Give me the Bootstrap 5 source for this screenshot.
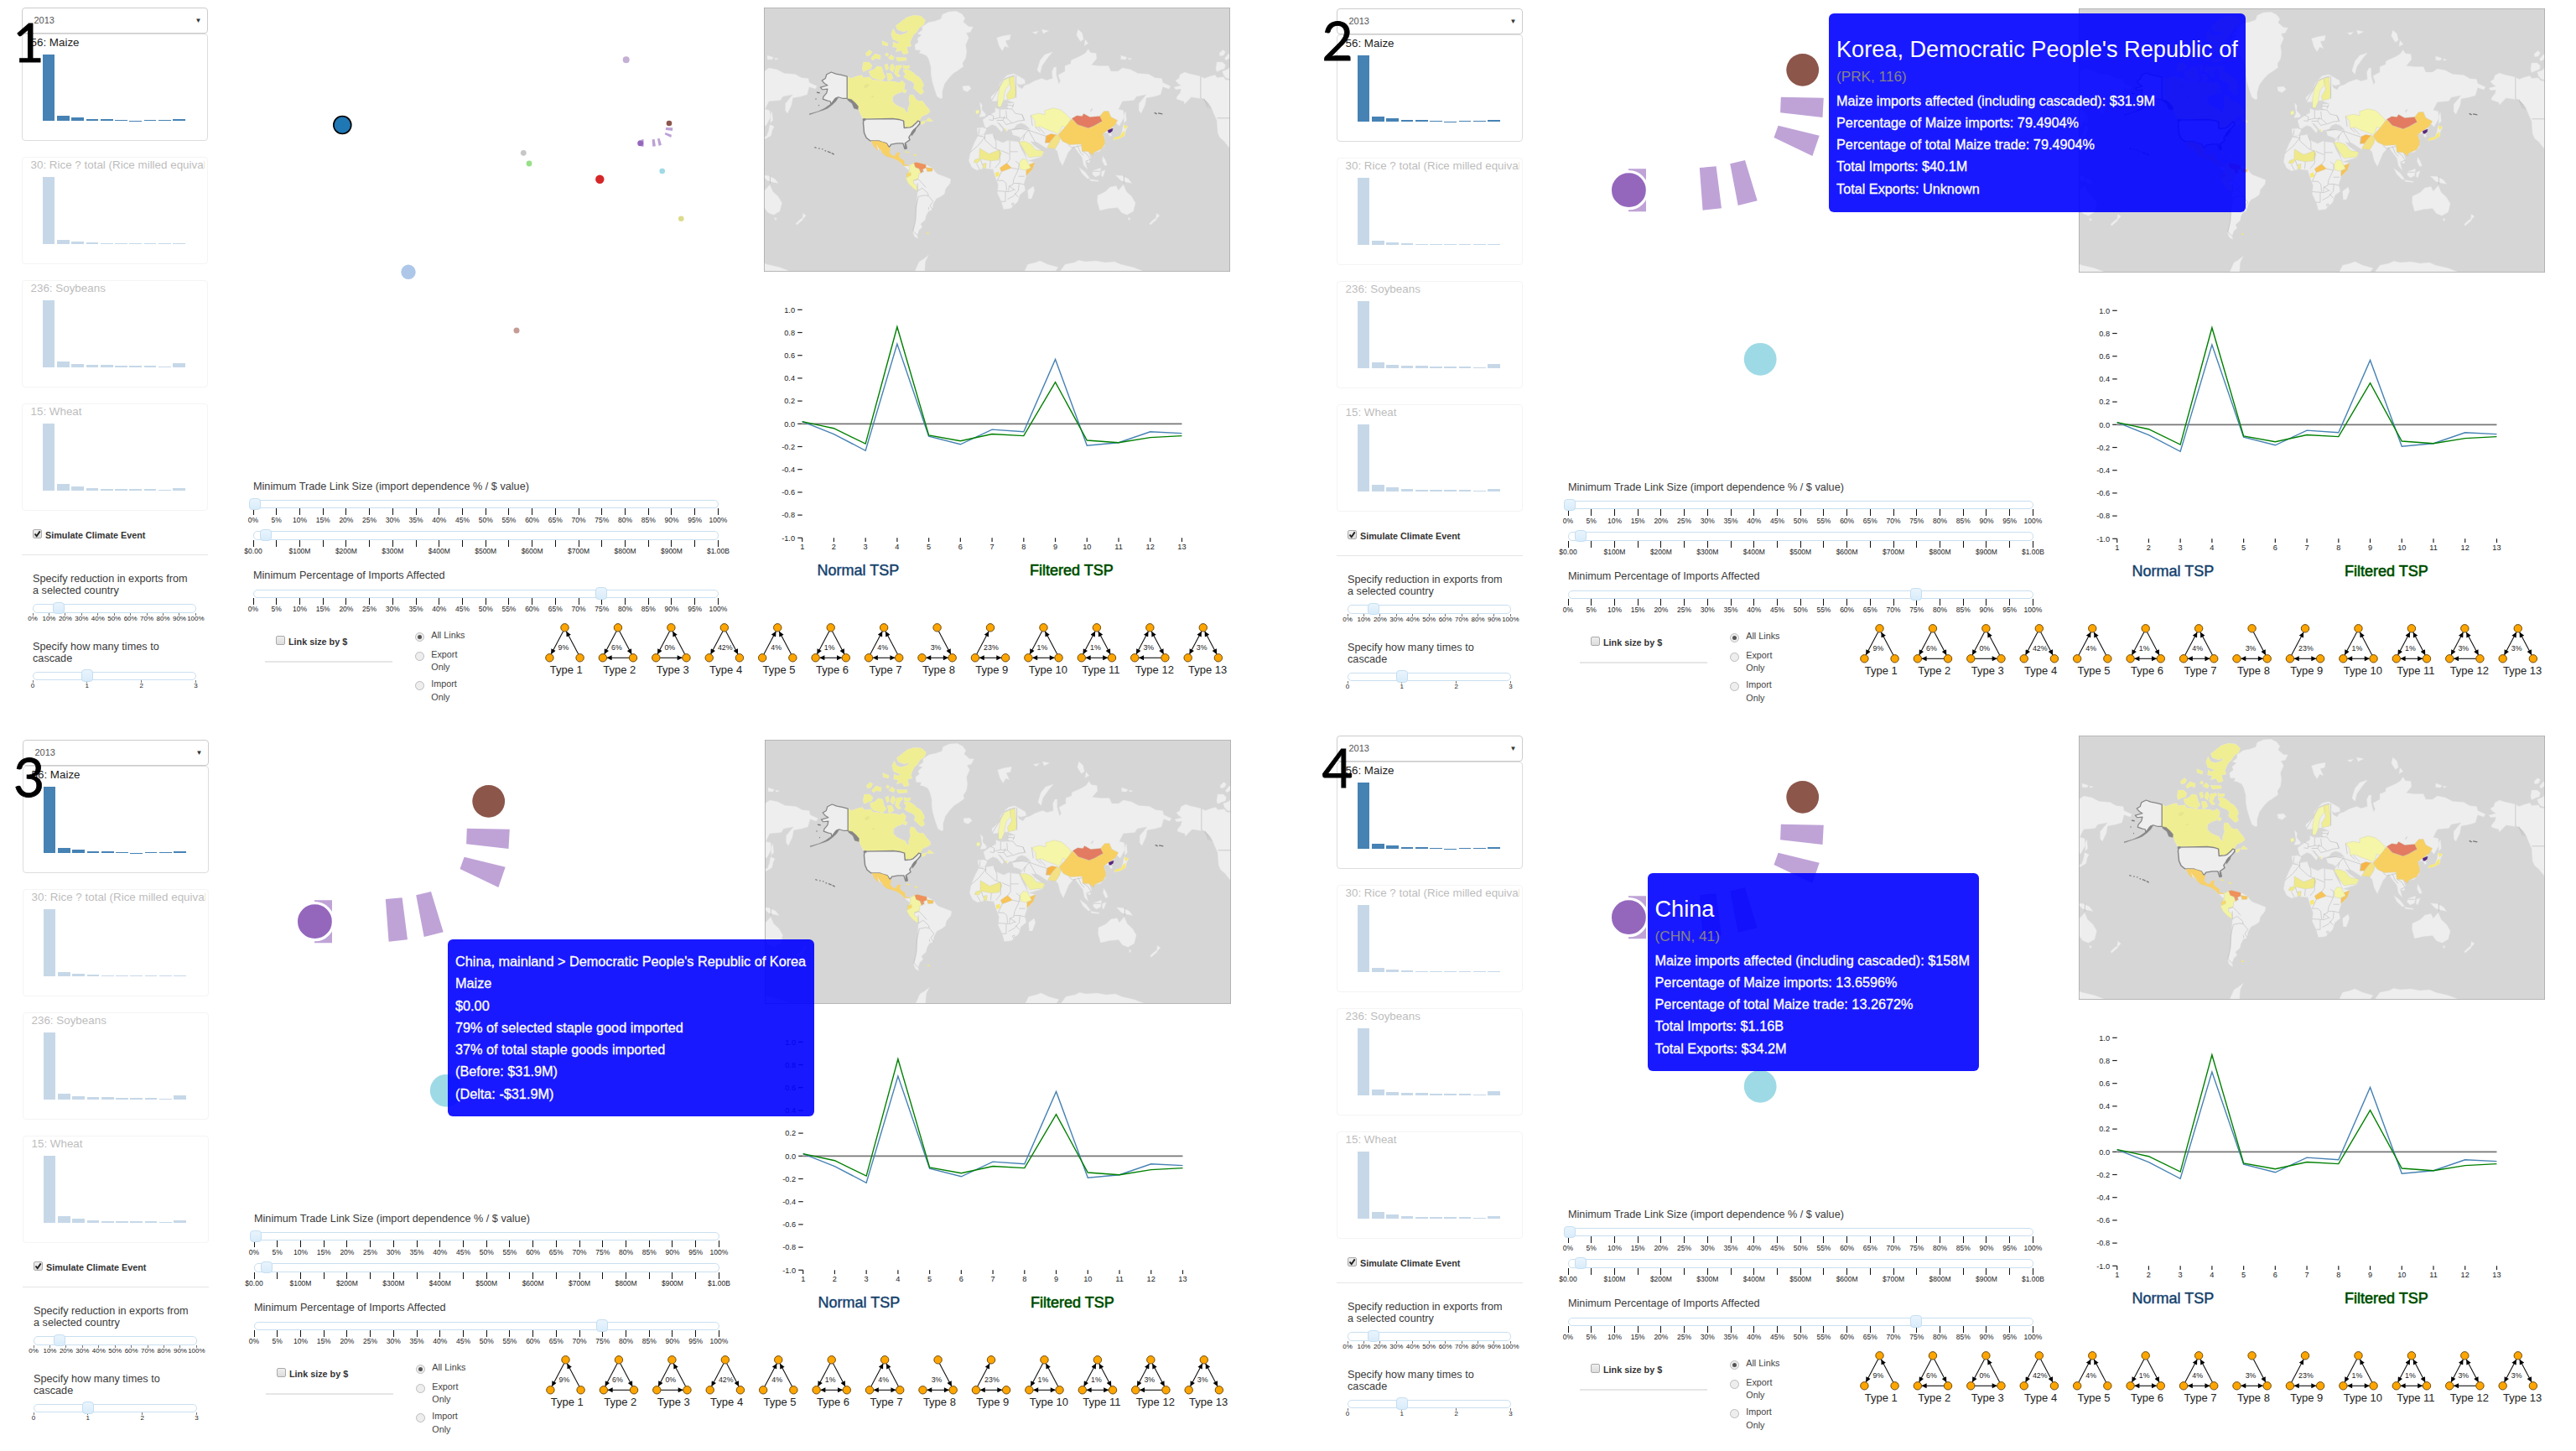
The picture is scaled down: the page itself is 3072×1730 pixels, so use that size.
<!DOCTYPE html>
<html lang="en">
<head>
<meta charset="utf-8">
<title>Staple food trade network explorer</title>
<link href="https://cdn.jsdelivr.net/npm/bootstrap@5.3.0/dist/css/bootstrap.min.css" rel="stylesheet">
<script src="https://cdn.jsdelivr.net/npm/bootstrap@5.3.0/dist/js/bootstrap.bundle.min.js"></script>
<style>
body{font-family:"Liberation Sans",Arial,sans-serif;color:#3a3a3a;background:#fff;width:3072px;height:1730px;overflow:hidden}
svg{display:block;flex:none}
svg text{font-family:"Liberation Sans",Arial,sans-serif}
.screen{height:865px;width:1504px}
.screen.wide{width:1568px}
.s2{padding-top:1px}.s3{padding:8px 0 0 1px}.s4{padding:3px 0 0 0}
.s3,.s4{height:865px}
.stepno{font-family:Lato,sans-serif;font-size:64px;line-height:64px;color:#000;z-index:5;-webkit-text-stroke:.8px #000}
.side{width:254px;padding:9px 6.5px 0 25.5px;flex:none}
.year{height:31px;border:1.4px solid #ccc;border-radius:4px;padding:0 6px 0 14px;font-size:11px;color:#555}
.arrow{font-size:8px;color:#333}
.crop{height:128.2px;border:1.3px solid #ddd;border-radius:4px;margin-bottom:18.7px;overflow:hidden}
.crop.dim{opacity:.3}
.crop-name{font-size:13.4px;line-height:17px;padding-left:10px;color:#222;white-space:nowrap;margin-right:3px;overflow:hidden;padding-top:.6px}
.bars{height:80px;margin-top:5.5px;padding-left:24.2px;gap:2.6px}
.bars i{width:14.7px;background:#4682b4;display:block}
.bx{width:11px;height:11px;border:1px solid #aaa;border-radius:2px;background:linear-gradient(#eee,#ddd);flex:none}
.lbl{font-size:10.8px;line-height:14px;font-weight:700;margin-left:4px;color:#333}
.rule{height:1.4px;background:#e6e6e6}
.cap{font-size:12.68px;line-height:13.7px;padding-left:13.5px}
.cap2{font-size:12.68px;line-height:15px}
.track{height:10.4px;border:1.7px solid #c9dff0;border-radius:5px;background:#fff}
.grip{width:14px;height:14.4px;top:-3.4px;margin-left:-7px;border:1px solid #c5dff2;border-radius:4px;background:linear-gradient(#e9f4fd,#d9ecfa)}
.ticks{height:18.4px;font-size:8.5px;line-height:9px;color:#222}
.ticks div{width:0;display:flex;flex-direction:column;align-items:center;white-space:nowrap}
.ticks div:before{content:"";width:1px;height:8px;background:#111;margin-bottom:1.4px;flex:none}
.small-t .ticks{height:11px;font-size:8px}
.small-t .ticks div:before{height:3px;margin-bottom:-1px;background:#777}
.side-s{padding:0 14px 0 13.5px}
.opt{font-size:10.8px;line-height:15.5px;color:#444}
.rd{width:11px;height:11px;border:1px solid #bbb;border-radius:50%;background:#eee;margin:4px 7.9px 0 0;flex:none;padding:2px}
.rd.on:before{content:"";display:block;width:5px;height:5px;border-radius:50%;background:#555}
.tip{background:rgba(0,0,255,.9);border-radius:6px;color:#fff;font-size:16.25px;line-height:26.25px;padding:13px 9px 14px;z-index:4;white-space:nowrap;-webkit-text-stroke:.3px #fff}
.tip.big{padding-top:22px}
.tip h3{font-size:27.15px;line-height:41px;margin:0;font-weight:400;-webkit-text-stroke:0}
.tip h4{font-size:17.2px;line-height:24px;margin:0 0 3.6px;font-weight:400;color:#858585;-webkit-text-stroke:0}
.t2{left:613px;top:16px;width:497px;height:237px}
.t3{left:534px;top:255px;width:437px;height:211px}
.t4{left:396.5px;top:176px;width:395px;height:236px}
</style>
</head>
<body>
<svg width="0" height="0" class="position-absolute">
<defs>
<marker id="ah" viewBox="0 0 10 10" refX="10" refY="5" markerWidth="7" markerHeight="6" markerUnits="userSpaceOnUse" orient="auto-start-reverse"><path d="M0 0L10 5L0 10z"/></marker>
<g id="land">
<path d="M298,273L310,280 330,272 345,268 350,277 372,275 378,285 400,288 420,291 440,290 455,292 465,296 475,288 485,300 482,315 472,330 458,335 445,345 444,362 455,375 470,383 482,388 488,400 494,404 494,388 500,370 497,355 500,338 512,340 520,355 530,362 540,360 550,375 562,390 565,400 555,408 540,415 532,425 530,432 532,442 522,455 512,465 505,478 497,490 500,500 485,512 490,530 484,532 478,512 460,512 440,516 433,526 425,512 412,508 398,538 372,503 360,492 353,475 350,430 340,405 333,385 325,370 312,358 298,352 285,350 268,347 258,358 246,372 244,362 235,360 220,354 222,345 232,332 235,318 218,320 212,312 235,305 225,298 217,288 228,280 232,266 247,258 262,264 280,268Z"/>
<path id="arctic" d="M478,250L490,247 500,252 512,260 520,270 530,275 540,290 545,305 540,315 545,330 535,338 522,325 512,315 515,300 505,290 492,285 480,275 486,265ZM350,222L368,222 378,232 375,245 362,250 350,256 347,245ZM368,255L385,248 395,236 410,240 415,262 422,275 410,288 395,283 380,279 372,268ZM418,232L428,228 432,245 424,252ZM438,232L445,228 452,240 445,258 436,250ZM455,235L472,232 475,240 466,248 462,262 470,272 460,275 450,262ZM478,232L488,236 500,234 498,245 480,246ZM425,262L440,262 446,280 430,290ZM358,190L370,178 378,185 372,198 360,200ZM375,208L388,192 406,198 404,212 390,208 380,216ZM410,145L430,155 428,165 412,160ZM425,188L432,194 428,202 420,196ZM430,208L440,195 450,206 445,215ZM455,205L488,206 490,216 460,218ZM447,150L458,156 470,150 500,150 505,165 490,168 495,190 480,195 472,180 455,185 460,170 445,168ZM455,92L475,75 490,62 512,55 535,57 550,72 545,88 530,100 522,115 512,125 505,140 500,155 480,150 465,150 445,140 440,120 447,102 455,120 470,125 490,118 496,108 480,114 460,106ZM560,420L575,432 565,434 552,432ZM535,436L550,430 548,440 538,446ZM480,318L490,322 486,332 476,330Z"/>
<path d="M525,120L540,108 540,95 560,80 580,76 600,68 605,52 625,42 650,40 668,50 678,65 672,78 690,95 704,96 695,115 682,118 690,135 680,160 683,185 680,208 670,225 672,238 655,252 640,262 625,280 612,300 605,325 605,350 600,353 588,345 580,320 572,290 568,262 568,240 562,215 555,200 540,192 530,190 535,180 518,178 516,160 528,150 524,138 538,125Z"/>
<path d="M375,504L400,504 412,508 425,513 430,525 437,528 434,545 442,555 452,558 458,546 467,545 464,558 472,568 482,575 482,588 495,590 500,590 513,582 552,588 575,602 580,612 590,622 615,632 632,640 630,655 615,675 612,692 600,702 585,710 575,730 572,750 560,755 552,772 550,785 535,800 540,812 530,822 524,840 526,853 515,845 510,830 515,810 520,780 522,740 525,683 510,672 495,655 488,640 490,625 498,610 480,592 460,572 440,563 412,548 400,528 385,520Z"/>
<path d="M763,360L762,345 772,335 785,320 790,300 800,283 815,268 835,263 855,275 870,285 872,298 855,303 845,298 850,310 862,318 870,305 885,300 900,290 925,280 940,287 960,280 958,255 965,240 972,240 972,268 980,300 985,290 978,268 1000,255 1000,235 1018,228 1020,215 1050,200 1065,190 1075,175 1082,188 1100,190 1102,210 1085,232 1110,235 1140,235 1148,255 1170,255 1185,243 1210,248 1235,262 1270,265 1290,278 1312,280 1315,295 1340,308 1335,318 1315,310 1308,338 1288,345 1262,350 1258,375 1245,405 1238,395 1238,370 1262,338 1230,345 1222,358 1185,362 1172,390 1188,395 1190,420 1175,450 1165,440 1150,462 1150,485 1145,488 1138,474 1122,476 1128,495 1128,520 1112,540 1090,545 1075,542 1083,565 1078,582 1065,575 1072,605 1060,590 1055,562 1040,540 1028,522 1010,545 992,592 982,572 975,540 965,530 940,530 910,508 888,505 900,520 932,545 925,560 880,575 870,540 855,510 855,490 832,482 828,466 860,460 888,462 872,445 858,440 845,445 835,460 818,462 812,470 806,462 790,440 780,436 800,462 795,472 778,450 765,445 750,455 738,482 720,482 716,458 742,455 735,428 755,412 775,400 775,385 790,392 815,390 815,370 838,368 812,356 770,362Z"/>
<path d="M720,485L768,478 775,498 800,510 815,502 850,507 858,530 880,575 903,580 895,605 875,630 868,655 872,680 855,695 848,720 825,745 802,748 795,720 782,690 785,660 775,630 768,605 740,602 715,608 700,598 690,575 695,545 708,510ZM880,680L898,665 902,680 892,710 882,710Z"/>
<path d="M725,365L733,375 732,392 745,408 742,416 724,418 730,400ZM713,394L723,393 724,404 712,408ZM670,308L690,306 698,316 685,328 672,322ZM780,135L800,128 825,124 822,142 808,145 818,170 806,165 798,182 788,165ZM960,186L935,195 920,215 910,250 920,262 926,235 945,205ZM1042,105L1055,118 1060,140 1050,148 1037,125ZM1065,142L1075,155 1062,163ZM895,115L915,112 905,122ZM925,105L948,110 930,120ZM1180,198L1200,205 1195,213 1180,212ZM1204,207L1216,210 1206,214ZM1195,398L1198,430 1190,440 1190,410ZM1188,445L1202,452 1196,465 1192,485 1175,495 1155,500 1160,492 1178,486 1184,468Z"/>
<path d="M1105,698L1130,685 1145,668 1165,664 1172,680 1188,660 1198,685 1215,702 1227,725 1220,755 1200,768 1182,760 1170,742 1140,745 1112,752 1104,720ZM1203,778L1211,780 1206,788ZM1295,762L1305,770 1292,785ZM1290,780L1296,784 1275,804 1272,798ZM1163,626L1185,628 1205,640 1215,655 1195,650 1180,645ZM1090,610L1115,600 1112,625 1098,632 1088,622ZM1045,598L1065,615 1080,637 1072,638 1055,620ZM1080,640L1108,645 1108,649 1082,646ZM1118,612L1130,608 1122,632 1117,628ZM1122,558L1130,572 1136,590 1128,592 1120,575Z"/>
<path d="M870,968L880,945 905,938 920,932 945,945 978,955 970,968ZM985,968L1000,945 1030,938 1045,930 1065,935 1100,932 1130,938 1160,935 1180,945 1220,955 1250,968ZM517,968L530,935 545,925 560,912 550,935 548,968Z"/>
</g>
<symbol id="world" viewBox="30 27 1502 944" preserveAspectRatio="none">
<rect x="30" y="27" width="1502" height="944" fill="#d6d6d6"/>
<g fill="#eee" stroke="#e6e6e6" stroke-width="1"><use href="#land" x="-1139"/><use href="#land" x="1139"/><use href="#land"/></g>
<path d="M50,627V655M1190,627V655M1437,273V350L1455,362 1468,388M1490,422H1532M1448,352L1460,385" stroke="#bbb" stroke-width="2" fill="none"/>
<path fill="#f0ee92" d="M298,273L310,280 330,272 345,268 350,277 372,275 378,285 400,288 420,291 440,290 455,292 465,296 475,288 485,300 482,315 472,330 458,335 445,345 444,362 455,375 470,383 482,388 488,400 494,404 494,388 500,370 497,355 500,338 512,340 520,355 530,362 540,360 550,375 562,390 565,400 555,408 540,415 532,430 520,440 510,453 486,457 480,432 465,427 447,424 350,424 340,405 333,385 325,370 312,358 298,352Z"/>
<use href="#arctic" fill="#f0ee92"/>
<path d="M350,308l12,-8 8,4 -12,12zM375,345l10,-4 -4,8z" fill="#e6e48c"/>
<path d="M298,352V273L280,268 262,264 247,258 232,266 228,280 217,288 225,298 235,305 212,312 218,320 235,318 232,332 222,345 220,354 235,360 244,362 246,372 252,365 262,350 270,347 285,352Z" fill="#eee" stroke="#868686" stroke-width="3.5" stroke-linejoin="round"/>
<path d="M298,352L312,355 325,368 334,380 333,391 320,387 314,370 300,358ZM270,348L262,362 250,375 235,387 222,393 200,401 177,410 176,407 205,398 225,387 245,372 258,352Z" fill="#868686" stroke="#868686"/>
<path d="M200,330l10,2M196,353l3,1M206,376l2,1M193,526l6,3M206,530l4,1M217,532l3,2M226,538l4,2M235,541l10,5M248,547l8,5M1288,403l8,4M1300,404l14,3" stroke="#777" stroke-width="4"/>
<path d="M352,426L445,424 465,427 480,432 482,457 500,455 508,452 520,440 526,432 532,434 532,442 522,455 512,465 505,478 497,490 500,500 485,512 490,530 484,532 478,512 460,512 440,516 433,526 425,512 412,508 400,503 372,503 360,492 353,475 350,440Z" fill="#eee" stroke="#868686" stroke-width="4" stroke-linejoin="round"/>
<path d="M348,423h10v8h-10zM512,463l10,-8 -4,14 -12,18 -2,-14zM483,512l7,4v16l-6,-2z" fill="#868686"/>
<g stroke="#c9c9a8" stroke-width="1">
<path fill="#f8d166" stroke="#efc45c" d="M375,504L400,504 412,508 425,513 430,525 437,528 434,545 442,555 452,558 458,546 467,545 464,558 472,568 482,575 482,588 495,590 498,593 480,592 472,582 460,572 440,563 425,558 412,548 408,538 400,528 390,512 398,538 385,524Z"/>
<path fill="#f3f3a4" d="M500,590L513,582 518,595 530,603 540,618 530,620 527,640 512,645 512,655 522,662 525,683 510,672 495,655 488,640 490,625 498,610Z"/>
<path fill="#fbd863" d="M490,620l12,-4 2,10 -14,8z"/>
<path fill="#f0905a" d="M513,582L522,580 552,588 552,600 542,605 544,613 535,618 530,603 518,598Z"/>
<path fill="#f8c357" d="M552,598L574,602 572,612 556,613 554,605Z"/>
<path fill="#f3f5ad" d="M783,382L783,350 790,310 805,285 820,278 822,300 808,320 803,345 802,360 793,382Z"/>
<path fill="#f0ee92" d="M820,278L836,272 838,300 842,330 838,350 815,356 812,340 825,318Z"/>
<path fill="#f5f6a8" d="M890,412L915,405 935,410 935,395 962,386 985,392 1000,405 1018,425 1010,445 1000,455 990,450 985,468 975,478 960,470 940,462 920,452 905,455 902,430Z"/>
<path fill="#f8d062" d="M1022,425L1040,445 1075,458 1092,450 1118,435 1112,415 1125,398 1140,397 1148,418 1169,430 1160,448 1145,460 1122,478 1128,500 1128,515 1118,532 1092,545 1090,555 1075,542 1055,540 1052,515 1015,517 992,505 978,482 1000,455Z"/>
<path fill="#e27b62" d="M1022,423L1038,413 1055,415 1060,406 1080,418 1112,415 1120,433 1092,450 1075,458 1040,445Z"/>
<path fill="#f8b545" d="M936,510L940,485 955,478 972,482 960,495 950,510Z"/>
<path fill="#f3e184" d="M972,480L985,492 980,510 968,532 942,528 950,512 960,496Z"/>
<path fill="#f2f19b" d="M852,507L870,505 890,515 905,535 932,540 925,558 905,560 885,563 870,540Z"/>
<path fill="#f7e873" stroke="none" d="M1188,445L1202,452 1192,462ZM1193,465L1192,485 1175,495 1155,500 1160,490 1178,486 1184,474ZM806,458l6,4 -4,6zM484,540l14,3 0,3 -14,-3zM513,551l10,2 -2,4 -8,-1zM553,832l8,0 0,4 -6,0zM775,617l12,-4 2,14 -12,6z"/>
<path fill="#f5f6a8" d="M713,394L723,393 724,404 712,408ZM852,585L862,568 875,570 885,590 890,600 870,608 855,604Z"/>
<path fill="#f8c357" d="M903,580L895,605 875,628 875,608 890,600 885,588ZM790,600L812,583 828,600 795,614Z"/>
<path fill="#efe98a" d="M725,530L755,550 790,535 794,550 785,572 760,575 730,568 718,582 706,580 710,570 724,566ZM736,585L746,583 745,600 735,602Z"/>
<path fill="#5a2a80" stroke="#4a2070" d="M1138,466l10,-5 6,-2 -2,9 -6,6 -6,0z"/>
</g>
<path fill="none" stroke="#bdbdbd" stroke-width="1.8" stroke-linejoin="round" d="M525,683L540,672 558,690 560,700 548,698 528,702 520,740 518,790 510,825 524,840M525,655V683M560,700L575,720 565,735 574,750M530,603L545,615M512,645L527,640 540,655 552,670M560,740L562,750M720,485L742,490 720,520 694,545M742,480V500L770,528 790,538M768,480L775,498 778,508V530M822,503V570M822,542H848M794,538L820,550M790,540V580L775,600M760,575L758,600M728,570L734,590M715,585L725,605M822,570L812,585M828,600L850,605 852,585 840,575M850,605L835,640 832,660 820,665 818,682M795,614L782,645 800,645 810,655 812,682M782,682L820,685 835,678M808,685V720H795M835,655L852,655 850,680 835,700 815,712M850,630H870M838,690L850,705M852,655L870,660M820,665L840,680M828,728l6,-3 2,6 -5,4zM757,408L770,415 768,430 755,428M790,392V420L770,425M790,420L812,422 810,395M812,422L830,440 850,432 868,430 862,410 840,405 830,390 812,388M780,430L800,430 810,445 828,440M800,430L805,415M835,370L830,385M812,375L835,378M738,455L750,460M724,460L722,480M830,462L858,460 882,465 870,480 865,500M882,465L895,490 905,510M870,480L855,500M882,465L895,470 915,478 938,486V510M915,455L935,478M905,455L920,470M1010,517L1022,528 1052,520M1040,520L1050,545 1060,555M1055,540L1070,550 1082,570 1068,575M1090,612L1112,612M763,360L785,320 800,285 820,275 838,270M1128,495M842,270L842,350M862,410L870,430M890,412L895,450"/>
<path d="M1082,398l6,-10M1148,478l6,0" stroke="#d0d0d0" stroke-width="3"/>
<rect x="31" y="28" width="1500" height="942" fill="none" stroke="#adadad" stroke-width="2.6"/>
</symbol>
</defs>
</svg>

<main id="board" class="d-flex flex-wrap"></main>

<script>
const crops=[
 ['56: Maize',[79.5,6.3,4.6,2.1,1.8,1.6,.6,1.2,.9,2.6]],
 ['30: Rice ? total (Rice milled equivalent)',[79.5,5,3,2,1.4,1,.8,.8,1,1.2]],
 ['236: Soybeans',[79.5,7,4,3,3,2,2,1.6,1.2,4.8]],
 ['15: Wheat',[79.5,7.6,4.4,2.6,1.8,1.8,1.4,1.4,.7,2.6]]];
const pct=n=>Array.from({length:100/n+1},(_,i)=>i*n+'%');
const slider=(pos,labels,mt,cls='')=>`<div class="${cls}" style="margin-top:${mt}px"><div class="track position-relative"><div class="grip position-absolute" style="left:${pos}%"></div></div><div class="ticks d-flex justify-content-between">${labels.map(l=>`<div>${l}</div>`).join('')}</div></div>`;
const money=Array.from({length:21},(_,i)=>i%2?'&nbsp;':i==0?'$0.00':i==20?'$1.00B':'$'+i*50+'M');

const side=`<aside class="side">
 <div class="year d-flex justify-content-between align-items-center"><span>2013</span><span class="arrow">▼</span></div>
 ${crops.map(([n,b],i)=>`<div class="crop ${i?'dim':''}"><div class="crop-name">${n}</div><div class="bars d-flex align-items-end">${b.map(h=>`<i style="height:${h}px"></i>`).join('')}</div></div>`).join('')}
 <div class="d-flex align-items-start" style="padding:3px 0 16px 13.5px"><span class="bx"><svg width="9" height="9" viewBox="0 0 9 9"><path d="M1.5 4.5L3.7 7.2L7.7 1.4" fill="none" stroke="#222" stroke-width="1.9"/></svg></span><span class="lbl">Simulate Climate Event</span></div>
 <div class="rule"></div>
 <div class="cap" style="margin-top:22.2px">Specify reduction in exports from<br>a selected country</div>
 ${slider(15.5,pct(10),9,'small-t side-s')}
 <div class="cap" style="margin-top:23px">Specify how many times to<br>cascade</div>
 ${slider(33.3,[0,1,2,3],8.6,'small-t side-s')}
</aside>`;

const net1=`<g fill="#9467bd" fill-opacity=".62" transform="translate(380,40) scale(.3333)"><path d="M1242,336L1267,337 1266,348 1242,345ZM1241,354L1263,362 1261,372 1238,361ZM1193,379L1202,378 1206,403 1195,404ZM1212,376L1220,375 1227,398 1217,402ZM1155,379H1163V404H1155Z"/></g>
<circle cx="408.3" cy="149" r="10.5" fill="#1f77b4" stroke="#000" stroke-width="1.6"/>`+
[[746.7,71.3,4,'#c5b0d5'],[798,147,3.3,'#8c564b'],[763.7,170.7,3.5,'#9467bd'],[624.3,182.3,3.4,'#c7c7c7'],[631,195,3.4,'#98df8a'],[715.3,213.7,5.2,'#d62728'],[789.7,204,3.3,'#9edae5'],[812.3,260.7,3.3,'#dbdb8d'],[487,324.3,8.7,'#aec7e8'],[616,394,3.5,'#c49c94']].map(c=>`<circle cx="${c[0]}" cy="${c[1]}" r="${c[2]}" fill="${c[3]}"/>`).join('');
const net2=`<path fill="#bfa3d7" d="M555.8,114.7L606.8,115.7 605.5,139 555.1,133.3ZM552.6,148.7L601.7,160.7 593.4,185 547.5,163ZM458.8,199L478.6,197.3 485,247.3 462.6,249.7ZM495.2,194.3L513,190 527.7,238.3 504.7,244ZM374,200.3H395V251.3H374Z"/>
<circle cx="581.7" cy="82.3" r="19.4" fill="#8c564b"/><circle cx="374.4" cy="225.7" r="22" fill="#9467bd" stroke="#fff" stroke-width="3.2"/><circle cx="531.2" cy="427.3" r="19.4" fill="#9edae5"/>`;

const X=i=>45.7+37.73*i, Y=v=>181.3-136*v;
const line=(a,c)=>`<polyline fill="none" stroke="${c}" stroke-width="1.4" points="${a.map((v,i)=>X(i)+','+Y(v)).join(' ')}"/>`;
let axis='';
for(let v=10;v>=-10;v-=2)axis+=`<text stroke="none" x="37" y="${Y(v/10)+3.2}" text-anchor="end">${(v/10).toFixed(1)}</text><path d="M40.2 ${Y(v/10)}h5.5"/>`;
for(let i=0;i<13;i++)axis+=`<text stroke="none" x="${X(i)}" y="330.7" text-anchor="middle">${i+1}</text><path d="M${X(i)} 317.3v4.8"/>`;
const chart=`<svg width="556" height="376" overflow="visible"><g font-size="9.2" fill="#222" stroke="#222" stroke-width="1.2">${axis}</g>
<path d="M45.7 181.3H${X(12)}" stroke="#777" stroke-width="1.8"/>
${line([.02,-.09,-.235,.7,-.11,-.18,-.05,-.07,.565,-.19,-.165,-.07,-.083],'#4682b4')}
${line([.02,-.04,-.175,.85,-.1,-.15,-.09,-.105,.365,-.145,-.165,-.12,-.105],'#008000')}
<text x="63.5" y="362" font-size="18" fill="#0f2c47" stroke="#2f6596" stroke-width=".55">Normal TSP</text>
<text x="317" y="362" font-size="18" fill="#003000" stroke="#006400" stroke-width=".65">Filtered TSP</text></svg>`;

// Triad edges: L = left side, R = right side, B = base; s/e/b = arrow at start, end or both
const tri=[['9%','Le Rs'],['6%','Le Re Bs'],['0%','Le Rs Be'],['42%','Le Re'],['4%','Ls Rs'],['1%','Le Re Bb'],['4%','Ls Rs Bb'],['3%','Re Bb'],['23%','Ls Bb'],['1%','Le Rs Bb'],['1%','Lb Rb Bb'],['3%','Lb Rb Bs'],['3%','Lb Rb']];
const seg={L:'M31.6 20.8L17.2 47.9',R:'M35.4 20.8L49.8 47.9',B:'M20.2 52.3H46.8'};
const types=`<svg width="860" height="88" overflow="visible" style="margin-top:-4px">${tri.map(([p,e],i)=>`<g transform="translate(${63.44*i},0)">${e.split(' ').map(k=>`<path d="${seg[k[0]]}" stroke="#111" stroke-width="1.1" ${k[1]!='e'?'marker-start="url(#ah)"':''} ${k[1]!='s'?'marker-end="url(#ah)"':''}/>`).join('')}<g fill="#ffa500" stroke="#6b4a10" stroke-width="1"><circle cx="33.5" cy="16.3" r="4.7"/><circle cx="15.4" cy="52.3" r="4.7"/><circle cx="51.6" cy="52.3" r="4.7"/></g><text x="25.6" y="43" font-size="8.8" fill="#222">${p}</text><text x="15.8" y="70.8" font-size="13" fill="#222">Type ${i+1}</text></g>`).join('')}</svg>`;

const main=n=>`<div class="flex-grow-1">
 <div class="d-flex">
  <div style="width:657px">
   <svg width="657" height="573.3" viewBox="254 0 657 573.3">${n==1?net1:net2}</svg>
   <div style="padding:0 54.5px 0 48px">
    <div class="cap2">Minimum Trade Link Size (import dependence % / $ value)</div>
    ${slider(.2,pct(5),7.7)}
    ${slider(2.5,money,8.5)}
    <div class="cap2" style="margin-top:17.2px">Minimum Percentage of Imports Affected</div>
    ${slider(75,pct(5),8.4)}
   </div>
  </div>
  <div style="padding-top:9px"><svg width="556" height="315"><use href="#world" width="556" height="315"/></svg>${chart}</div>
 </div>
 <div class="d-flex align-items-start">
  <div style="margin:27px 27px 0 61.7px;width:152.7px">
   <div class="d-flex" style="padding:0 0 16px 13.3px"><span class="bx"></span><span class="lbl">Link size by $</span></div><div class="rule"></div>
  </div>
  <div style="width:144.5px;padding-top:18.5px" class="opt">
   <div class="d-flex"><span class="rd on"></span><span>All Links</span></div>
   <div class="d-flex" style="margin-top:7.2px"><span class="rd"></span><span>Export<br>Only</span></div>
   <div class="d-flex" style="margin-top:4.7px"><span class="rd"></span><span>Import<br>Only</span></div>
  </div>
  <div style="padding-top:4.3px">${types}</div>
 </div>
</div>`;

const tips={1:'',
2:`<div class="tip big t2 position-absolute"><h3>Korea, Democratic People's Republic of</h3><h4>(PRK, 116)</h4>Maize imports affected (including cascaded): $31.9M<br>Percentage of Maize imports: 79.4904%<br>Percentage of total Maize trade: 79.4904%<br>Total Imports: $40.1M<br>Total Exports: Unknown</div>`,
3:`<div class="tip t3 position-absolute">China, mainland &gt; Democratic People's Republic of Korea<br>Maize<br>$0.00<br>79% of selected staple good imported<br>37% of total staple goods imported<br>(Before: $31.9M)<br>(Delta: -$31.9M)</div>`,
4:`<div class="tip big t4 position-absolute"><h3>China</h3><h4>(CHN, 41)</h4>Maize imports affected (including cascaded): $158M<br>Percentage of Maize imports: 13.6596%<br>Percentage of total Maize trade: 13.2672%<br>Total Imports: $1.16B<br>Total Exports: $34.2M</div>`};
const no={1:[15.5,17.5],2:[8.5,15.5],3:[16,28.5],4:[8.5,18]};
document.getElementById('board').innerHTML=[1,2,3,4].map(n=>`<section class="screen s${n} ${n%2?'wide':''} position-relative d-flex"><div class="stepno position-absolute" style="left:${no[n][0]}px;top:${no[n][1]}px">${n}</div>${side}${main(n)}${tips[n]}</section>`).join('');
</script>
</body>
</html>
